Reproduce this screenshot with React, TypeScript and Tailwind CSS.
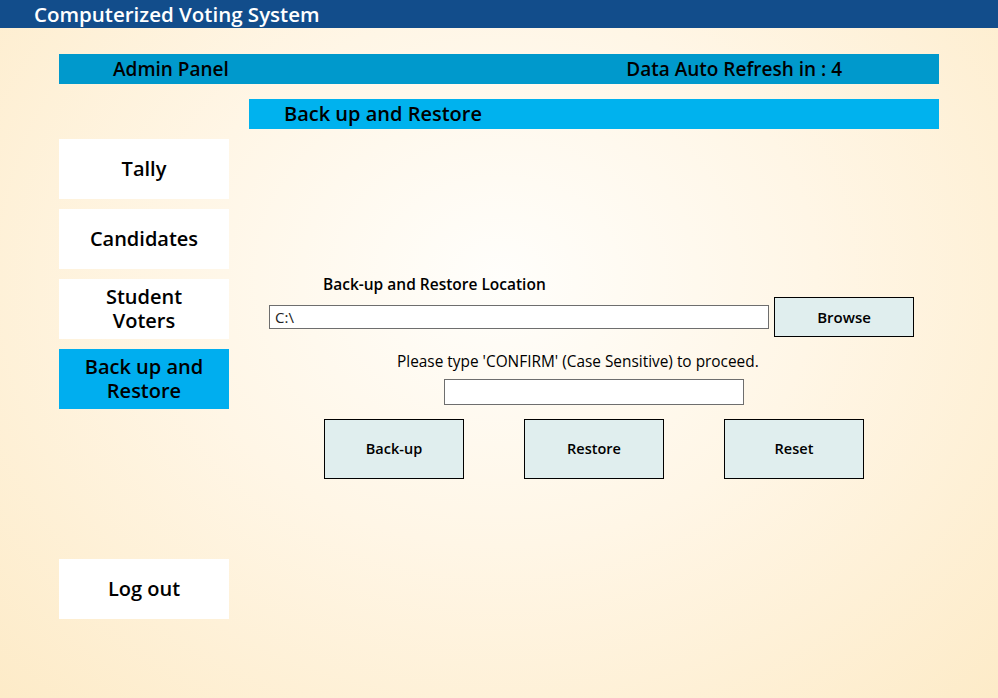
import React, {useState} from "react";

const font = {fontFamily: '"Open Sans", "Noto Sans", sans-serif'};

const SideButton = ({label, active = false}: {label: string; active?: boolean}) => (
  <button
    className={`w-[170px] h-[60px] flex items-center justify-center whitespace-pre-line text-center text-[20px] leading-[24px] font-semibold text-black ${active ? "bg-[#00aeef]" : "bg-white"}`}
  >
    {label}
  </button>
);

const ActionButton = ({label}: {label: string}) => (
  <button className="w-[140px] h-[60px] bg-[#e0eeee] border border-black text-[14.5px] font-semibold text-black">
    {label}
  </button>
);

export default function App() {
  const [path, setPath] = useState("C:\\");
  const [confirm, setConfirm] = useState("");

  return (
    <div
      className="w-[998px] h-[698px] overflow-hidden bg-[radial-gradient(ellipse_at_50%_40%,#fffefb_0%,#fff6e6_45%,#fdebc8_100%)]"
      style={font}
    >
      {/* title bar */}
      <div className="h-[28px] bg-[#124d8b] flex items-center pl-[34px]">
        <span className="text-white text-[20.5px] font-semibold leading-none">Computerized Voting System</span>
      </div>

      <div className="pl-[59px] pt-[26px]">
        {/* admin bar */}
        <div className="w-[880px] h-[30px] bg-[#0099cc] flex items-center">
          <span className="ml-[54px] text-[19px] font-semibold text-black">Admin Panel</span>
          <span className="ml-auto mr-[97px] text-[19px] font-semibold text-black">Data Auto Refresh in : 4</span>
        </div>

        <div className="flex mt-[15px]">
          {/* sidebar */}
          <div className="w-[170px] pt-[40px] flex flex-col gap-[10px]">
            <SideButton label="Tally" />
            <SideButton label="Candidates" />
            <SideButton label={"Student\nVoters"} />
            <SideButton label={"Back up and\nRestore"} active />
            <div className="h-[130px]" />
            <SideButton label="Log out" />
          </div>

          {/* content */}
          <div className="ml-[20px] w-[690px]">
            <div className="h-[30px] bg-[#00b2ee] flex items-center pl-[35px]">
              <span className="text-[20px] font-semibold text-black">Back up and Restore</span>
            </div>

            <div className="pt-[145px]">
              <div className="ml-[74px] text-[15.5px] font-semibold text-black leading-[20px]">
                Back-up and Restore Location
              </div>
              <div className="flex items-center mt-[3px] ml-[20px]">
                <input
                  value={path}
                  onChange={(e) => setPath(e.target.value)}
                  className="w-[500px] h-[24px] border border-[#6e6e6e] bg-white px-[5px] text-[15px] text-[#222] outline-none"
                />
                <button className="ml-[5px] w-[140px] h-[40px] bg-[#e0eeee] border border-black text-[15px] font-semibold text-black">
                  Browse
                </button>
              </div>
              <div className="ml-[148px] mt-[15px] text-[15.4px] text-black leading-[20px]">
                Please type 'CONFIRM' (Case Sensitive) to proceed.
              </div>
              <input
                value={confirm}
                onChange={(e) => setConfirm(e.target.value)}
                className="block ml-[195px] mt-[7px] w-[300px] h-[26px] border border-[#6e6e6e] bg-white px-[4px] text-[14px] outline-none"
              />
              <div className="flex gap-[60px] ml-[75px] mt-[14px]">
                <ActionButton label="Back-up" />
                <ActionButton label="Restore" />
                <ActionButton label="Reset" />
              </div>
            </div>
          </div>
        </div>
      </div>
    </div>
  );
}
